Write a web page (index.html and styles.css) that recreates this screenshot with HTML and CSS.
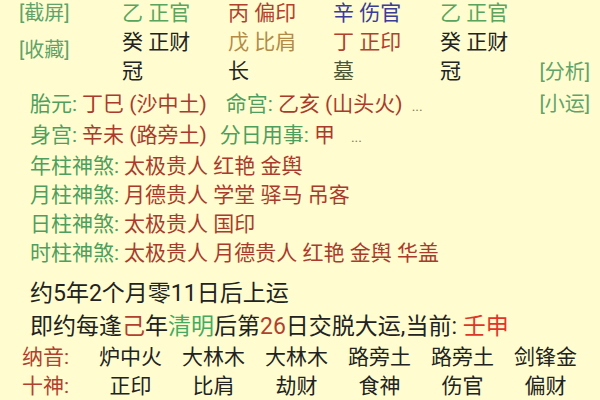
FILE: index.html
```html
<!DOCTYPE html>
<html lang="zh">
<head>
<meta charset="utf-8">
<link rel="stylesheet" href="styles.css">
</head>
<body>
<div class="page">
  <div class="pillars">
    <div class="btn b-shot">[截屏]</div>
    <div class="cell c1 r1 green">乙 正官</div>
    <div class="cell c2 r1 red">丙 偏印</div>
    <div class="cell c3 r1 blue">辛 伤官</div>
    <div class="cell c4 r1 green">乙 正官</div>

    <div class="btn b-fav">[收藏]</div>
    <div class="cell c1 r2 black">癸 正财</div>
    <div class="cell c2 r2 tan">戊 比肩</div>
    <div class="cell c3 r2 red">丁 正印</div>
    <div class="cell c4 r2 black">癸 正财</div>

    <div class="cell c1 r3 black">冠</div>
    <div class="cell c2 r3 black">长</div>
    <div class="cell c3 r3 olive">墓</div>
    <div class="cell c4 r3 black">冠</div>
    <div class="btn b-ana">[分析]</div>
  </div>

  <div class="info">
    <div class="line">
      <span class="k">胎元:</span><span class="v">丁巳 (沙中土)</span><span class="k seg1">命宫:</span><span class="v">乙亥 (山头火)</span><span class="dots">...</span>
      <span class="btn b-small">[小运]</span>
    </div>
    <div class="line">
      <span class="k">身宫:</span><span class="v">辛未 (路旁土)</span><span class="k seg2">分日用事:</span><span class="v">甲</span><span class="dots d2">...</span>
    </div>
    <div class="line"><span class="k">年柱神煞:</span><span class="v">太极贵人 红艳 金舆</span></div>
    <div class="line"><span class="k">月柱神煞:</span><span class="v">月德贵人 学堂 驿马 吊客</span></div>
    <div class="line"><span class="k">日柱神煞:</span><span class="v">太极贵人 国印</span></div>
    <div class="line"><span class="k">时柱神煞:</span><span class="v">太极贵人 月德贵人 红艳 金舆 华盖</span></div>
  </div>

  <div class="yun">
    <div class="bigline">约5年2个月零11日后上运</div>
    <div class="bigline">即约每逢<span class="red">己</span>年<span class="green2">清明</span>后第<span class="red">26</span>日交脱大运,当前: <span class="bright">壬申</span></div>
  </div>

  <div class="table">
    <div class="tlabel">纳音:</div>
    <div class="tcell">炉中火</div>
    <div class="tcell">大林木</div>
    <div class="tcell">大林木</div>
    <div class="tcell">路旁土</div>
    <div class="tcell">路旁土</div>
    <div class="tcell">剑锋金</div>

    <div class="tlabel">十神:</div>
    <div class="tcell">正印</div>
    <div class="tcell">比肩</div>
    <div class="tcell">劫财</div>
    <div class="tcell">食神</div>
    <div class="tcell">伤官</div>
    <div class="tcell">偏财</div>
  </div>
</div>
</body>
</html>
```

FILE: styles.css
```css
html, body {
  margin: 0;
  padding: 0;
  background: #fffdcf;
}

body {
  width: 600px;
  height: 400px;
  overflow: hidden;
  font-family: Roboto, "Noto Sans CJK SC", sans-serif;
  color: #222;
}

.page {
  display: flex;
  flex-direction: column;
}

.pillars {
  display: grid;
  grid-template-columns: 122px 106px 105px 107px 1fr;
  grid-template-rows: 29px 29px 29px;
  margin-top: -1px;
  font-size: 21px;
  line-height: 29px;
}

.cell { white-space: nowrap; }
.c1 { grid-column: 2; }
.c2 { grid-column: 3; }
.c3 { grid-column: 4; }
.c4 { grid-column: 5; }
.r1 { grid-row: 1; }
.r2 { grid-row: 2; }
.r3 { grid-row: 3; }

.btn {
  color: #5fa36a;
  font-size: 20px;
}

.b-shot {
  grid-column: 1;
  grid-row: 1;
  padding-left: 19px;
}

.b-fav {
  grid-column: 1;
  grid-row: 2 / span 2;
  padding-left: 19px;
  padding-top: 8px;
}

.b-ana {
  grid-column: 5;
  grid-row: 3;
  justify-self: end;
  margin-right: 10px;
  margin-top: 1px;
}

.green { color: #5aa55e; }
.red { color: #b2402e; }
.blue { color: #3b3b9a; }
.tan { color: #b38a48; }
.black { color: #222; }
.olive { color: #4b5638; }
.green2 { color: #45aa5f; }
.bright { color: #e23527; }

.info {
  margin-top: 4px;
  padding-left: 30px;
  font-size: 21px;
  line-height: 29px;
}

.line {
  display: flex;
  align-items: baseline;
  white-space: pre;
}

.k { color: #4e9f5e; }
.v { color: #aa3b2c; margin-left: 5px; }

.seg1 { margin-left: 19px; }
.seg2 { margin-left: 13px; }

.dots {
  color: #8a7a5a;
  font-size: 14px;
  margin-left: 9px;
}
.d2 { margin-left: 16px; }

.b-small {
  margin-left: auto;
  margin-right: 10px;
}

.yun {
  margin-top: 9px;
  padding-left: 30px;
  font-size: 23px;
  line-height: 33px;
}

.bigline {
  white-space: nowrap;
  color: #222;
}

.table {
  display: grid;
  grid-template-columns: 89px repeat(6, 83px);
  grid-auto-rows: 29px;
  font-size: 21px;
  line-height: 29px;
}

.tlabel {
  color: #b2402e;
  padding-left: 22px;
}

.tcell {
  text-align: center;
  color: #222;
}
```
